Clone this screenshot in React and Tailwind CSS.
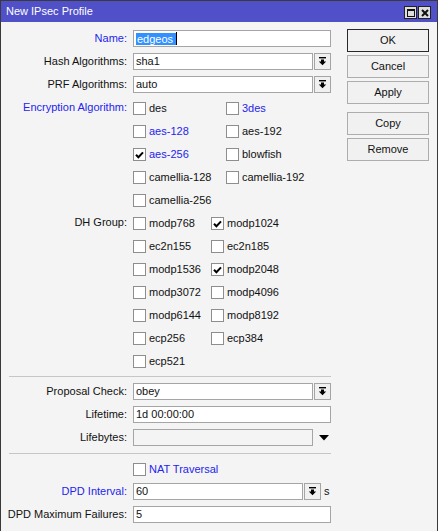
import React from "react";

const BLUE = "text-[#2424ee]";

function Box({ checked }) {
  return (
    <span className="w-[13px] h-[13px] border border-[#8e8e8e] bg-white flex items-center justify-center shrink-0">
      {checked && (
        <svg width="9" height="8" viewBox="0 0 9 8">
          <path d="M1 3.8 L3.4 6.3 L8 1.4" stroke="#000" strokeWidth="2" fill="none" />
        </svg>
      )}
    </span>
  );
}

function Check({ label, checked, blue, w }) {
  return (
    <div className={`flex items-center mt-[2px] shrink-0 ${w}`}>
      <Box checked={checked} />
      <span className={`ml-[3px] whitespace-nowrap ${blue ? BLUE : ""}`}>{label}</span>
    </div>
  );
}

function Label({ children, blue }) {
  return (
    <div className={`w-[126px] shrink-0 text-right whitespace-nowrap ${blue ? BLUE : ""}`}>{children}</div>
  );
}

function Row({ label, blue, children }) {
  return (
    <div className="flex items-center h-[17px]">
      <Label blue={blue}>{label}</Label>
      <div className="ml-[6px] w-[198px] flex items-center h-[17px]">{children}</div>
    </div>
  );
}

function DropIcon() {
  return (
    <svg width="9" height="9" viewBox="0 0 9 9">
      <rect x="1" y="0" width="7" height="1.4" fill="#000" />
      <path d="M3 2.6 H6 V4.4 H8.2 L4.5 8.2 L0.8 4.4 H3 Z" fill="#000" />
    </svg>
  );
}

function DropBtn() {
  return (
    <div className="ml-[1px] w-[17px] h-[17px] border border-[#a5a5a5] bg-[#f0f0f0] flex items-center justify-center shrink-0">
      <DropIcon />
    </div>
  );
}

function Input({ children, w, disabled }) {
  return (
    <div
      className={`h-[17px] border border-[#a5a5a5] ${disabled ? "bg-[#f4f4f4]" : "bg-white"} pl-[2px] flex items-center whitespace-nowrap ${w}`}
    >
      {children}
    </div>
  );
}

function Sep() {
  return <div className="mt-[1px] ml-[8px] w-[322px] border-t border-[#c6c6c6]" />;
}

function Btn({ children, def }) {
  return (
    <div
      className={`h-[23px] w-[82px] border ${def ? "border-[#2a2a2a]" : "border-[#adadad]"} bg-[#f1f1f1] flex items-center justify-center text-[#111]`}
    >
      {children}
    </div>
  );
}

export default function App() {
  return (
    <div className="w-[438px] h-[531px] overflow-hidden bg-[#f4f4f4] border-x border-t border-[#3a3a3a] font-['Liberation_Sans',sans-serif] text-[11px] text-[#111]">
      <div className="h-[21px] bg-[#5050c8] flex items-center justify-between pl-[5px] pr-[6px] text-white text-[11px]">
        <span>New IPsec Profile</span>
        <div className="flex mt-[2px]">
          <div className="w-[13px] h-[13px] border border-[#222] bg-[#dedede] flex items-center justify-center">
            <div className="w-[8px] h-[8px] border border-[#111] border-t-2" />
          </div>
          <div className="ml-[1px] w-[13px] h-[13px] border border-[#222] bg-[#dedede] flex items-center justify-center">
            <svg width="8" height="8" viewBox="0 0 8 8">
              <path d="M1 1 L7 7 M7 1 L1 7" stroke="#111" strokeWidth="2" />
            </svg>
          </div>
        </div>
      </div>

      <div className="flex pt-[7px]">
        <div className="w-[330px] pt-[1px] flex flex-col gap-[6px]">
          <Row label="Name:" blue>
            <Input w="w-[198px]">
              <span className="bg-[#3390ff] text-white h-[12px] leading-[12px] pl-[1px] pr-[3px]">edgeos</span>
              <span className="w-[1px] h-[13px] bg-black" />
            </Input>
          </Row>
          <Row label="Hash Algorithms:">
            <Input w="w-[180px]">sha1</Input>
            <DropBtn />
          </Row>
          <Row label="PRF Algorithms:">
            <Input w="w-[180px]">auto</Input>
            <DropBtn />
          </Row>

          <Row label="Encryption Algorithm:" blue>
            <Check label="des" w="w-[93px]" />
            <Check label="3des" blue />
          </Row>
          <Row label="">
            <Check label="aes-128" blue w="w-[93px]" />
            <Check label="aes-192" />
          </Row>
          <Row label="">
            <Check label="aes-256" blue checked w="w-[93px]" />
            <Check label="blowfish" />
          </Row>
          <Row label="">
            <Check label="camellia-128" w="w-[93px]" />
            <Check label="camellia-192" />
          </Row>
          <Row label="">
            <Check label="camellia-256" w="w-[93px]" />
          </Row>

          <Row label="DH Group:">
            <Check label="modp768" w="w-[78px]" />
            <Check label="modp1024" checked />
          </Row>
          <Row label="">
            <Check label="ec2n155" w="w-[78px]" />
            <Check label="ec2n185" />
          </Row>
          <Row label="">
            <Check label="modp1536" w="w-[78px]" />
            <Check label="modp2048" checked />
          </Row>
          <Row label="">
            <Check label="modp3072" w="w-[78px]" />
            <Check label="modp4096" />
          </Row>
          <Row label="">
            <Check label="modp6144" w="w-[78px]" />
            <Check label="modp8192" />
          </Row>
          <Row label="">
            <Check label="ecp256" w="w-[78px]" />
            <Check label="ecp384" />
          </Row>
          <Row label="">
            <Check label="ecp521" w="w-[78px]" />
          </Row>

          <Sep />

          <Row label="Proposal Check:">
            <Input w="w-[180px]">obey</Input>
            <DropBtn />
          </Row>
          <Row label="Lifetime:">
            <Input w="w-[198px]">1d 00:00:00</Input>
          </Row>
          <Row label="Lifebytes:">
            <Input w="w-[180px]" disabled />
            <div className="ml-[1px] w-[17px] h-[17px] flex items-center justify-center">
              <svg width="10" height="6" viewBox="0 0 10 6" className="ml-[2px]">
                <path d="M0 0 H10 L5 5.5 Z" fill="#000" />
              </svg>
            </div>
          </Row>

          <Sep />

          <Row label="">
            <Check label="NAT Traversal" blue />
          </Row>
          <Row label="DPD Interval:" blue>
            <Input w="w-[170px]">60</Input>
            <DropBtn />
            <span className="ml-[3px]">s</span>
          </Row>
          <Row label="DPD Maximum Failures:">
            <Input w="w-[198px]">5</Input>
          </Row>
        </div>

        <div className="ml-[16px] flex flex-col">
          <Btn def>OK</Btn>
          <div className="mt-[3px]"><Btn>Cancel</Btn></div>
          <div className="mt-[3px]"><Btn>Apply</Btn></div>
          <div className="mt-[8px]"><Btn>Copy</Btn></div>
          <div className="mt-[3px]"><Btn>Remove</Btn></div>
        </div>
      </div>
    </div>
  );
}
